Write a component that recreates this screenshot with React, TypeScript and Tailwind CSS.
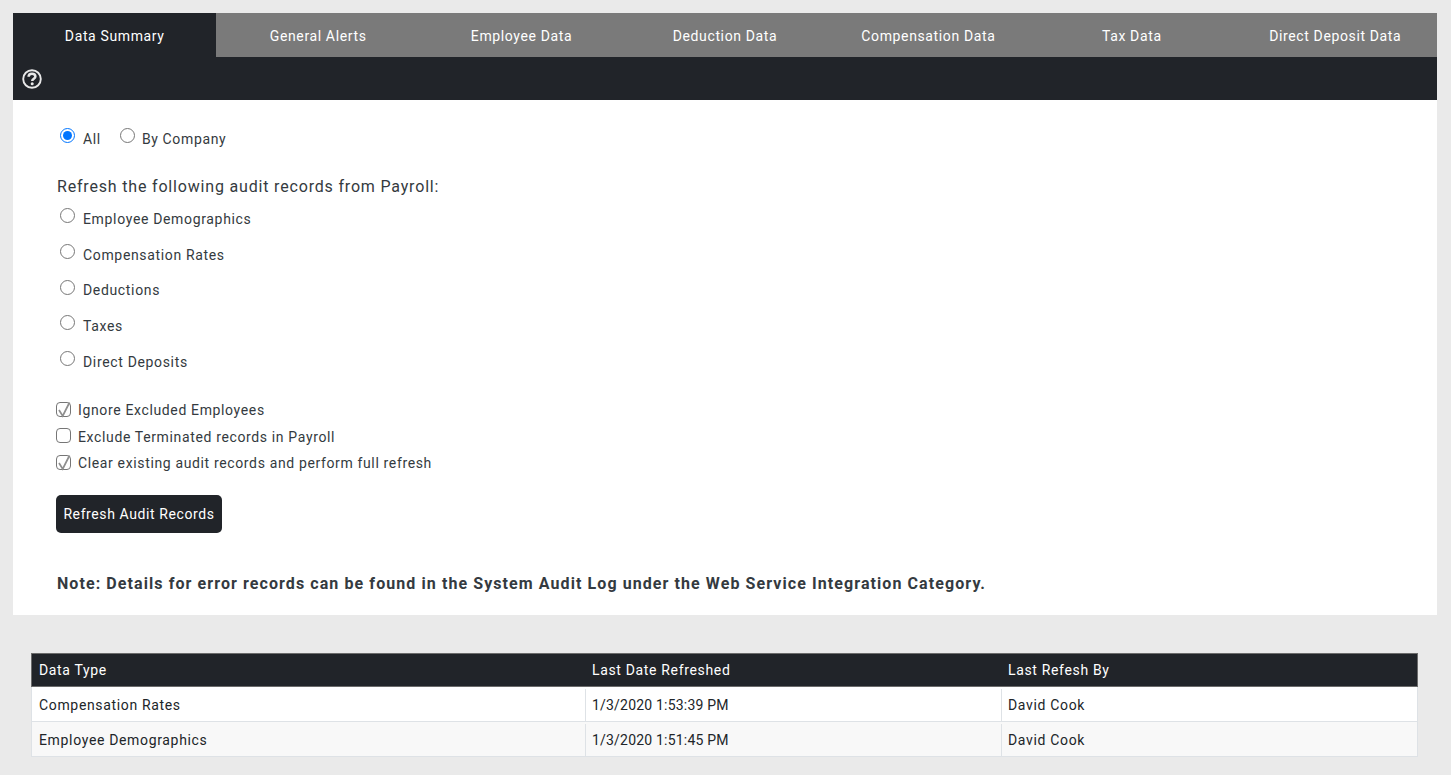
const tabs = ["Data Summary", "General Alerts", "Employee Data", "Deduction Data", "Compensation Data", "Tax Data", "Direct Deposit Data"];
const audits = ["Employee Demographics", "Compensation Rates", "Deductions", "Taxes", "Direct Deposits"];

const rows = [
  { type: "Compensation Rates", date: "1/3/2020 1:53:39 PM", by: "David Cook" },
  { type: "Employee Demographics", date: "1/3/2020 1:51:45 PM", by: "David Cook" },
];

const Radio = ({ checked = false }: { checked?: boolean }) => (
  <input type="radio" readOnly checked={checked} className="m-0 h-[15px] w-[15px] shrink-0" />
);

const Check = ({ checked, label }: { checked: boolean; label: string }) => (
  <div className="flex h-[26.5px] items-center">
    <span className="relative -mt-[3px] h-[15px] w-[15px] shrink-0 rounded-[4px] border border-[#767676] bg-white">
      {checked && (
        <svg viewBox="0 0 15 15" className="absolute -left-px -top-px h-[15px] w-[15px] overflow-visible" fill="none" stroke="#8f8f8f" strokeWidth="1.7">
          <path d="M3 8L6.7 14L13.5 0.5" />
        </svg>
      )}
    </span>
    <span className="ml-[7px] text-[14px] tracking-[0.64px]">{label}</span>
  </div>
);

const App = () => {
  return (
    <div className="min-h-[775px] bg-[#eaeaea] pb-[13px] pl-[13px] pr-[14px] pt-[13px] font-['Roboto','Liberation_Sans',sans-serif] text-[#343a40]">
      <div className="flex h-[44px] bg-[#7a7a7a]">
        {tabs.map((tab, i) => (
          <div
            key={tab}
            className={`flex flex-1 items-center justify-center pt-[2px] text-[14px] tracking-[0.63px] text-white ${i === 0 ? "bg-[#212429]" : ""}`}
          >
            {tab}
          </div>
        ))}
      </div>
      <div className="flex h-[43px] items-center bg-[#212429] pl-[9px]">
        <svg viewBox="0 0 20 20" className="h-[20px] w-[20px]" fill="none">
          <circle cx="10" cy="10" r="8.8" stroke="#e8e8e8" strokeWidth="1.9" />
          <path d="M6.6 7.8C6.6 5.8 8.1 4.7 10 4.7C12 4.7 13.4 5.9 13.4 7.5C13.4 9.6 10.2 9.8 10.2 12" stroke="#e8e8e8" strokeWidth="2.5" />
          <circle cx="10.2" cy="14.8" r="1.5" fill="#e8e8e8" />
        </svg>
      </div>

      <div className="h-[515px] bg-white pl-[43px] pt-[27px]">
        <div className="flex h-[17px] items-center pl-[4px]">
          <Radio checked />
          <span className="ml-[8px] mt-[7px] text-[14px] tracking-[0.64px]">All</span>
          <span className="ml-[19px] flex"><Radio /></span>
          <span className="ml-[7px] mt-[7px] text-[14px] tracking-[0.64px]">By Company</span>
        </div>

        <p className="ml-[1px] mt-[31px] text-[16px] leading-[24px] tracking-[0.82px]">Refresh the following audit records from Payroll:</p>

        <div className="mt-[-1px]">
          {audits.map((a) => (
            <div key={a} className="flex h-[35.7px] items-center pl-[4px]">
              <Radio />
              <span className="ml-[8px] mt-[7px] text-[14px] tracking-[0.66px]">{a}</span>
            </div>
          ))}
        </div>

        <div className="mt-[21px]">
          <Check checked label="Ignore Excluded Employees" />
          <Check checked={false} label="Exclude Terminated records in Payroll" />
          <Check checked label="Clear existing audit records and perform full refresh" />
        </div>

        <button className="mt-[18.5px] h-[38px] w-[166px] rounded-[5px] bg-[#212429] text-[14px] tracking-[0.6px] text-white">
          Refresh Audit Records
        </button>

        <p className="ml-[1px] mt-[38.5px] text-[16px] font-bold leading-[24px] tracking-[1.08px]">
          Note: Details for error records can be found in the System Audit Log under the Web Service Integration Category.
        </p>
      </div>

      <div className="ml-[18px] mt-[38px] w-[1387px] text-[14px] tracking-[0.66px]">
        <div className="grid h-[34px] grid-cols-[553px_416px_1fr] items-center border border-[#6b6b6b] bg-[#212429] pt-[1px] text-white">
          <div className="pl-[7px]">Data Type</div>
          <div className="pl-[7px]">Last Date Refreshed</div>
          <div className="pl-[7px]">Last Refesh By</div>
        </div>
        {rows.map((row, i) => (
          <div
            key={row.type}
            className={`grid h-[35px] grid-cols-[553px_416px_1fr] border-x border-b border-[#dee2e6] pt-[2px] text-[#212529] ${i === 1 ? "bg-[#f8f8f8]" : "bg-white"}`}
          >
            <div className="flex items-center pl-[7px]">{row.type}</div>
            <div className="flex items-center border-l border-[#dee2e6] pl-[6px] tracking-[0.2px]">{row.date}</div>
            <div className="flex items-center border-l border-[#dee2e6] pl-[6px]">{row.by}</div>
          </div>
        ))}
      </div>
    </div>
  );
};

export default App;
